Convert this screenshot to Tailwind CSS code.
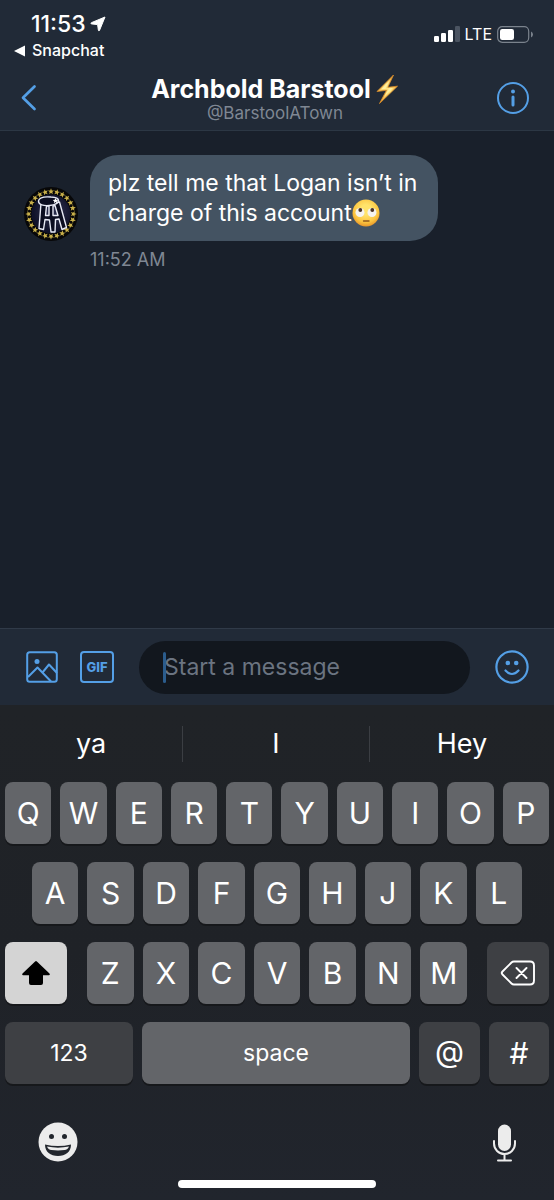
<!DOCTYPE html>
<html lang="en">
<head>
<meta charset="utf-8">
<meta name="viewport" content="width=device-width, initial-scale=1">
<title>Archbold Barstool</title>
<script src="https://cdn.jsdelivr.net/npm/@tailwindcss/browser@4"></script>
</head>
<body class="flex min-h-screen flex-col bg-[#19202b] font-['Inter','Liberation_Sans',sans-serif] text-white">

<header class="border-b border-[#2c3744] bg-[#212a37]">
  <div class="flex h-[66px] items-start justify-between pr-[21px] pl-[14px] pt-3">
    <div>
      <div class="flex items-center gap-1 pl-[17px]">
        <span class="text-[23px] leading-6 font-medium">11:53</span>
        <svg class="h-4 w-4" viewBox="0 0 16 16" fill="#fff" aria-hidden="true"><path d="M15 1 9.500 14.400Q8.900 15.600 8.400 14.200L7.600 8.600 1.600 7.900Q.2 7.500 1.400 6.700Z" stroke="#fff" stroke-width="1" stroke-linejoin="round"/></svg>
      </div>
      <a href="#" class="flex items-center gap-[7px] text-base leading-[29px] font-medium">
        <svg class="h-3 w-[11px]" viewBox="0 0 11 12" fill="#fff" aria-hidden="true"><path d="M0 6 11 .5v11Z"/></svg>Snapchat</a>
    </div>
    <div class="flex items-center gap-[5px] pt-[10px]">
      <svg class="h-4 w-[26px]" viewBox="0 0 26 16" fill="#fff" role="img" aria-label="Signal"><rect x="0" y="10" width="5" height="6" rx="1.200"/><rect x="7" y="7" width="5" height="9" rx="1.200"/><rect x="14" y="4" width="5" height="12" rx="1.200"/><rect x="21" y="0" width="5" height="16" rx="1.200" fill="#4b5461"/></svg>
      <span class="text-base leading-6">LTE</span>
      <svg class="h-[17px] w-9" viewBox="0 0 36 17" role="img" aria-label="Battery"><rect x=".7" y=".7" width="31" height="15.600" rx="4.500" fill="none" stroke="#7b838d" stroke-width="1.200"/><rect x="3" y="3" width="14" height="11" rx="2.200" fill="#fff"/><path d="M34 5.500q2 1 2 3t-2 3Z" fill="#7b838d"/></svg>
    </div>
  </div>
  <div class="flex h-16 items-start justify-between pr-6 pl-5">
    <button type="button" aria-label="Back" class="w-[34px] pt-[18px]">
      <svg class="h-7 w-[18px]" viewBox="0 0 18 28" fill="none" stroke="#549fe6" stroke-width="2.700" stroke-linecap="round" stroke-linejoin="round"><path d="M14.500 2.500 3 13.800 14.500 25"/></svg>
    </button>
    <div class="flex flex-col items-center pt-2">
      <h1 class="flex items-center gap-1 text-[25px] leading-7 font-bold">Archbold Barstool
        <svg class="h-[30px] w-6" viewBox="0 0 24 30" role="img" aria-label="Lightning"><defs><linearGradient id="bolt" x1="1" y1="0" x2="0" y2="1"><stop offset="0" stop-color="#e88a1d"/><stop offset=".45" stop-color="#ffe27a"/><stop offset="1" stop-color="#ef9b28"/></linearGradient></defs><path d="M18.500 1 2 17.500 11.500 16.300 4.500 29.500 22.500 12.200 12.800 13.300Z" fill="url(#bolt)" stroke="#d88b2a" stroke-width=".8" stroke-linejoin="round"/><path d="M15 6 6 15.500 14 14.500 9 23 18 14 10.500 14.500Z" fill="#fff0a0"/></svg>
      </h1>
      <p class="text-[17px] leading-[18px] text-[#7f8793]">@BarstoolATown</p>
    </div>
    <button type="button" aria-label="Conversation info" class="pt-[15px]">
      <svg class="h-[34px] w-[34px]" viewBox="0 0 34 34" fill="#549fe6"><circle cx="17" cy="17" r="15" fill="none" stroke="#549fe6" stroke-width="2"/><circle cx="17" cy="10.600" r="2"/><rect x="15.500" y="14.600" width="3" height="11" rx="1.500"/></svg>
    </button>
  </div>
</header>

<main class="flex-1 px-6 pt-6">
  <div class="flex items-end gap-3">
    <svg class="h-[54px] w-[54px] shrink-0" viewBox="0 0 54 54" role="img" aria-label="Archbold Barstool avatar">
      <defs>
        <radialGradient id="glow" cx=".55" cy=".45"><stop offset="0" stop-color="#343653"/><stop offset="1" stop-color="#10122a"/></radialGradient>
        <path id="star" d="M27 1.300 27.800 3.400 30 3.500 28.300 4.900 28.900 7.100 27 5.900 25.100 7.100 25.700 4.900 24 3.500 26.200 3.400Z"/>
      </defs>
      <circle cx="27" cy="27" r="27" fill="#070708"/><circle cx="27" cy="27" r="19.500" fill="url(#glow)"/>
      <g fill="#c9b04a">
        <use href="#star"/><use href="#star" transform="rotate(15 27 27)"/><use href="#star" transform="rotate(30 27 27)"/><use href="#star" transform="rotate(45 27 27)"/><use href="#star" transform="rotate(60 27 27)"/><use href="#star" transform="rotate(75 27 27)"/><use href="#star" transform="rotate(90 27 27)"/><use href="#star" transform="rotate(105 27 27)"/><use href="#star" transform="rotate(120 27 27)"/><use href="#star" transform="rotate(135 27 27)"/><use href="#star" transform="rotate(150 27 27)"/><use href="#star" transform="rotate(165 27 27)"/><use href="#star" transform="rotate(180 27 27)"/><use href="#star" transform="rotate(195 27 27)"/><use href="#star" transform="rotate(210 27 27)"/><use href="#star" transform="rotate(225 27 27)"/><use href="#star" transform="rotate(240 27 27)"/><use href="#star" transform="rotate(255 27 27)"/><use href="#star" transform="rotate(270 27 27)"/><use href="#star" transform="rotate(285 27 27)"/><use href="#star" transform="rotate(300 27 27)"/><use href="#star" transform="rotate(315 27 27)"/><use href="#star" transform="rotate(330 27 27)"/><use href="#star" transform="rotate(345 27 27)"/>
      </g>
      <g stroke="#e8eaf5" stroke-width="1.400" stroke-linejoin="round">
        <path d="M17 16 15 41.500 19.500 42.500 21 32.500 25.500 33 27 45 31 45 31.500 32.500 35 32 38 42.500 42.500 40.500 35.500 15Z" fill="#0b0d20"/>
        <path d="M22.500 19 21.500 28.500H25V19ZM29 19V28.500H34L31 18.500Z" fill="#272a48"/>
        <path d="M14.500 14C15 10.500 21 9.500 27 10c4 .2 7.500 1.400 7.500 3.500s-3 4.500-9 5c-6 .5-11-.5-11-4.500Z" fill="#0b0d20"/>
      </g>
      <path d="m31.500 11 .8 1.800 2 .2-1.500 1.200.4 2-1.700-1.100-1.700 1.100.4-2-1.500-1.200 2-.2Z" fill="#fff"/>
    </svg>
    <div class="rounded-[28px] rounded-bl-none bg-[#445362] py-[13px] pr-[21px] pl-[18px] text-[23px] leading-[30px]">
      <p>plz tell me that Logan isn’t in<br>charge of this account<svg class="inline-block h-7 w-7 align-[-6px]" viewBox="0 0 28 28" role="img" aria-label="Face with rolling eyes"><defs><radialGradient id="face" cx=".5" cy=".38" r=".62"><stop offset=".3" stop-color="#ffe36b"/><stop offset=".75" stop-color="#fcc43f"/><stop offset="1" stop-color="#e8962a"/></radialGradient></defs><circle cx="14" cy="14" r="13.500" fill="url(#face)"/><circle cx="8" cy="13.500" r="4.500" fill="#f5f3ef"/><circle cx="20" cy="13.500" r="4.500" fill="#f5f3ef"/><circle cx="8.300" cy="11" r="1.900" fill="#4b3324"/><circle cx="20.300" cy="11" r="1.900" fill="#4b3324"/><path d="M11.500 22h5.500" stroke="#8f571c" stroke-width="1.300" stroke-linecap="round"/></svg></p>
    </div>
  </div>
  <time class="block pt-[9px] pl-[66px] text-lg leading-5 text-[#7f8793]">11:52 AM</time>
</main>

<form class="flex h-[77px] items-center border-t border-[#303a48] bg-[#212a37] pr-[25px] pl-[26px]">
  <button type="button" aria-label="Add photo">
    <svg class="h-8 w-8" viewBox="0 0 32 32" fill="none" stroke="#549fe6" stroke-width="2" stroke-linejoin="round"><rect x="1.200" y="1.200" width="29.600" height="29.600" rx="2.500"/><path d="m2 26 9.500-9.500L25 30.500M16.500 21.500l6.500-8 8 8.500"/><circle cx="11" cy="10.500" r="2.500" fill="#549fe6" stroke="none"/></svg>
  </button>
  <button type="button" class="ml-[22px] h-8 w-[34px] shrink-0 rounded-[4px] border-2 border-[#549fe6] text-center text-[13px] leading-7 font-extrabold text-[#549fe6]">GIF</button>
  <div class="relative mr-[25px] ml-[25px] min-w-0 flex-1">
    <input type="text" aria-label="Message" placeholder="Start a message" class="h-[53px] w-full rounded-full bg-[#12171e] px-[25px] text-[23px] text-white outline-none placeholder:text-[#6b7481]">
    <span class="absolute top-[11px] left-6 h-[31px] w-[3px] rounded-full bg-[#2b5c8c]"></span>
  </div>
  <button type="button" aria-label="Emoji">
    <svg class="h-[34px] w-[34px]" viewBox="0 0 34 34" fill="#549fe6"><circle cx="17" cy="17" r="15.600" fill="none" stroke="#549fe6" stroke-width="2.200"/><circle cx="12.800" cy="13" r="2.300"/><circle cx="21.200" cy="13" r="2.300"/><path d="M10.500 20.500q6.500 7 13 0" fill="none" stroke="#549fe6" stroke-width="2.200" stroke-linecap="round"/></svg>
  </button>
</form>

<section aria-label="Keyboard" class="bg-linear-to-b from-[#202327] via-[#1f2227] to-[#21252d] pb-3">
  <div class="flex h-[77px] items-center text-[27px]">
    <button type="button" class="h-9 w-[182px] leading-9">ya</button>
    <button type="button" class="h-9 flex-1 border-x border-[#3b3e43] leading-9">I</button>
    <button type="button" class="h-9 w-[184px] leading-9">Hey</button>
  </div>
  <div class="flex flex-col gap-[18px] px-[5px] text-[30px]">
    <div class="flex h-[62px] gap-[9px] *:min-w-0 *:flex-1 *:rounded-lg *:bg-[#636569] *:shadow-[0_2px_0_#16181b]">
      <button type="button">Q</button><button type="button">W</button><button type="button">E</button><button type="button">R</button><button type="button">T</button><button type="button">Y</button><button type="button">U</button><button type="button">I</button><button type="button">O</button><button type="button">P</button>
    </div>
    <div class="flex h-[62px] gap-[9px] px-[27px] *:min-w-0 *:flex-1 *:rounded-lg *:bg-[#636569] *:shadow-[0_2px_0_#16181b]">
      <button type="button">A</button><button type="button">S</button><button type="button">D</button><button type="button">F</button><button type="button">G</button><button type="button">H</button><button type="button">J</button><button type="button">K</button><button type="button">L</button>
    </div>
    <div class="flex h-[62px] gap-5">
      <button type="button" aria-label="Shift" class="flex w-[62px] shrink-0 items-center justify-center rounded-lg bg-[#d4d4d4] shadow-[0_2px_0_#16181b]">
        <svg class="h-[26px] w-[30px]" viewBox="0 0 30 26" fill="#000"><path d="M14.100 1.400Q15 .6 15.900 1.400L28.500 13.500Q29.500 15 28 15.300H22V23Q22 25 20 25H10Q8 25 8 23V15.300H2Q.5 15 1.500 13.500Z"/></svg>
      </button>
      <div class="flex min-w-0 flex-1 gap-[9px] *:min-w-0 *:flex-1 *:rounded-lg *:bg-[#636569] *:shadow-[0_2px_0_#16181b]">
        <button type="button">Z</button><button type="button">X</button><button type="button">C</button><button type="button">V</button><button type="button">B</button><button type="button">N</button><button type="button">M</button>
      </div>
      <button type="button" aria-label="Delete" class="flex w-[62px] shrink-0 items-center justify-center rounded-lg bg-[#3e4044] shadow-[0_2px_0_#16181b]">
        <svg class="h-[26px] w-9" viewBox="0 0 36 26" fill="none" stroke="#fff" stroke-width="1.900" stroke-linecap="round" stroke-linejoin="round"><path d="M14 1.500H30Q34 1.500 34 5.500V20.500Q34 24.500 30 24.500H14Q12.500 24.500 11.500 23.500L2.500 14.500Q1 13 2.500 11.500L11.500 2.500Q12.500 1.500 14 1.500ZM16.500 8l10 10M26.500 8l-10 10"/></svg>
      </button>
    </div>
    <div class="flex h-[62px] gap-[9px] *:rounded-lg *:shadow-[0_2px_0_#16181b]">
      <button type="button" class="w-32 bg-[#3e4044] text-[23px]">123</button>
      <button type="button" class="flex-1 bg-[#636569] text-[23px]">space</button>
      <button type="button" class="w-[61px] bg-[#3e4044] pb-1">@</button>
      <button type="button" class="w-[60px] bg-[#3e4044]">#</button>
    </div>
  </div>
  <div class="flex h-24 items-end justify-between pr-[37px] pl-[38px]">
    <button type="button" aria-label="Emoji keyboard" class="pb-[18px]">
      <svg class="h-10 w-10" viewBox="0 0 40 40"><circle cx="20" cy="20" r="19.500" fill="#ececec"/><circle cx="13.500" cy="14.500" r="2.500" fill="#22262d"/><circle cx="26.500" cy="14.500" r="2.500" fill="#22262d"/><path d="M7 22.500q13 3 26 0C33 30 27.500 34 20 34S7 30 7 22.500Z" fill="#22262d"/><path d="M9 24.500q11 2.300 22 0c-.5 2-2.500 3.300-4.500 3.600q-6.500.8-13 0C11.500 27.800 9.500 26.500 9 24.500Z" fill="#ececec"/></svg>
    </button>
    <button type="button" aria-label="Dictate" class="pb-[18px]">
      <svg class="h-[38px] w-[25px]" viewBox="0 0 25 38" fill="none" stroke="#ececec" stroke-width="2" stroke-linecap="round"><rect x="6" y=".5" width="13" height="26.500" rx="6.500" fill="#ececec" stroke="none"/><path d="M2 17v2.500a10.500 10.500 0 0 0 21 0V17M12.500 30v6M6 36.500h13"/></svg>
    </button>
  </div>
  <div class="mx-auto h-2 w-[198px] rounded-full bg-white"></div>
</section>
</body>
</html>
